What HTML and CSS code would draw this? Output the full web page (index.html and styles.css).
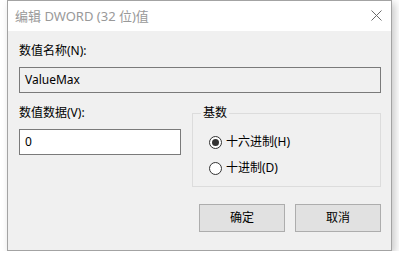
FILE: index.html
```html
<!DOCTYPE html>
<html lang="zh-CN">
<head>
<meta charset="utf-8">
<title>编辑 DWORD (32 位)值</title>
<link rel="stylesheet" href="styles.css">
</head>
<body>
<div class="window">
  <div class="titlebar">
    <span class="title">编辑 DWORD (32 位)值</span>
    <span class="close">
      <svg width="11" height="11" viewBox="0 0 11 11"><path d="M0.5 0.5 L10.5 10.5 M10.5 0.5 L0.5 10.5" stroke="#6b6b6b" stroke-width="1" fill="none"/></svg>
    </span>
  </div>
  <div class="content">
    <div class="label first">数值名称(N):</div>
    <div class="field readonly">ValueMax</div>
    <div class="row">
      <div class="col-left">
        <div class="label">数值数据(V):</div>
        <div class="field input">0</div>
      </div>
      <div class="group">
        <span class="legend">基数</span>
        <div class="radio-row r1"><span class="radio checked"><span class="dot"></span></span><span>十六进制(H)</span></div>
        <div class="radio-row r2"><span class="radio"></span><span>十进制(D)</span></div>
      </div>
    </div>
    <div class="buttons">
      <div class="btn">确定</div>
      <div class="btn">取消</div>
    </div>
  </div>
</div>
</body>
</html>
```
FILE: styles.css
```css
html, body {
  margin: 0;
  padding: 0;
  background: #ffffff;
}
body {
  font-family: "Noto Sans", "Noto Sans CJK SC", sans-serif;
  font-size: 12px;
  color: #000;
}
.window {
  margin-left: 7px;
  width: 385px;
  height: 251px;
  box-sizing: border-box;
  border: 1px solid #a3a3a3;
  background: #f0f0f0;
  box-shadow: 3px 3px 8px rgba(0,0,0,0.22);
}
.titlebar {
  height: 30px;
  background: #ffffff;
  display: flex;
  align-items: center;
  justify-content: space-between;
  padding-left: 7px;
  padding-right: 9px;
}
.title {
  color: #999999;
  font-size: 13px;
  line-height: 16px;
  margin-top: -1px;
}
.close {
  display: flex;
  margin-top: -2px;
}
.content {
  padding: 0 10px 0 11px;
}
.label {
  line-height: 16px;
  height: 16px;
}
.label.first {
  padding-top: 12px;
}
.field {
  box-sizing: border-box;
  height: 26px;
  border: 1px solid #7a7a7a;
  margin-top: 8px;
  padding-left: 5px;
  line-height: 24px;
}
.readonly {
  width: 362px;
  background: #f0f0f0;
}
.input {
  width: 162px;
  background: #ffffff;
}
.row {
  display: flex;
  gap: 11px;
}
.col-left {
  margin-top: 12px;
}
.group {
  position: relative;
  margin-top: 20px;
  box-sizing: border-box;
  width: 189px;
  height: 74px;
  border: 1px solid #dcdcdc;
}
.legend {
  position: absolute;
  left: 8px;
  top: -9px;
  padding: 0 2px;
  background: #f0f0f0;
  line-height: 16px;
}
.radio-row {
  display: flex;
  align-items: center;
  gap: 4px;
  margin-left: 16px;
  line-height: 16px;
}
.r1 { margin-top: 20px; }
.r2 { margin-top: 10px; }
.radio {
  box-sizing: border-box;
  width: 13px;
  height: 13px;
  border: 1px solid #333;
  border-radius: 50%;
  background: #fff;
  display: flex;
  align-items: center;
  justify-content: center;
}
.dot {
  width: 7px;
  height: 7px;
  border-radius: 50%;
  background: #333;
}
.buttons {
  display: flex;
  justify-content: flex-end;
  gap: 10px;
  margin-top: 17px;
  width: 362px;
}
.btn {
  box-sizing: border-box;
  width: 86px;
  height: 28px;
  border: 1px solid #adadad;
  background: #e1e1e1;
  text-align: center;
  line-height: 26px;
}
```
